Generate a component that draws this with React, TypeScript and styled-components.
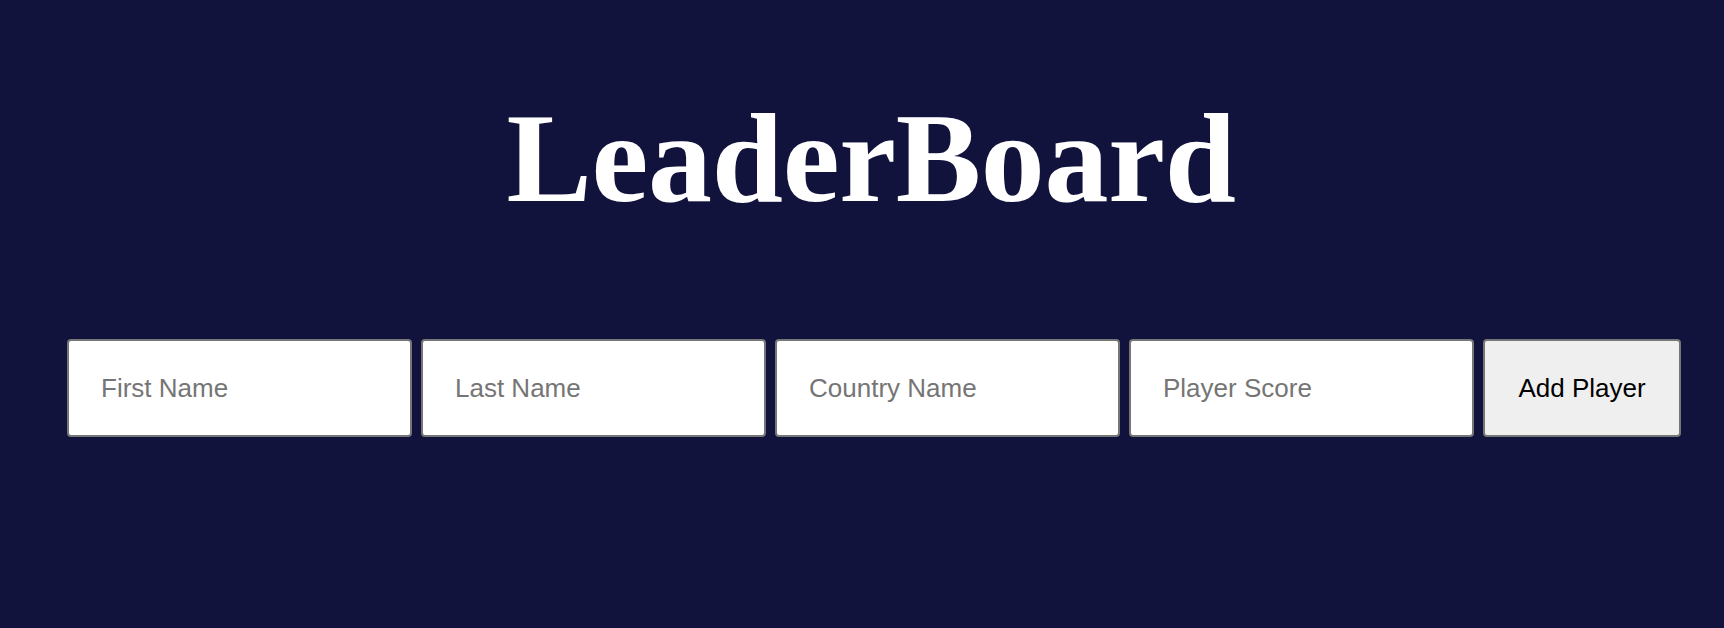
import React from "react";
import styled, { createGlobalStyle } from "styled-components";

const GlobalStyle = createGlobalStyle`
  html, body {
    margin: 0;
    padding: 0;
    background: #11133c;
  }
  body {
    font-family: "Liberation Sans", Arial, sans-serif;
  }
`;

const Page = styled.main`
  min-height: 628px;
  box-sizing: border-box;
  background: #11133c;
  padding: 94px 0 0 18px;
  display: flex;
  flex-direction: column;
  align-items: center;
`;

const Title = styled.h1`
  margin: 0;
  font-family: "Liberation Serif", "Times New Roman", serif;
  font-weight: 700;
  font-size: 128px;
  line-height: 128px;
  letter-spacing: -0.3px;
  color: #ffffff;
`;

const Form = styled.form`
  margin-top: 117px;
  display: flex;
  gap: 9px;
  padding-left: 6px;
`;

const Field = styled.input`
  box-sizing: border-box;
  width: 345px;
  height: 98px;
  padding: 0 32px;
  border: 2px solid #767676;
  border-radius: 4px;
  background: #ffffff;
  font-family: "Liberation Sans", Arial, sans-serif;
  font-size: 26px;
  color: #000;
  outline: none;
  &::placeholder {
    color: #757575;
  }
`;

const Button = styled.button`
  box-sizing: border-box;
  width: 198px;
  height: 98px;
  padding: 0 32px;
  border: 2px solid #767676;
  border-radius: 4px;
  background: #efefef;
  font-family: "Liberation Sans", Arial, sans-serif;
  font-size: 26px;
  color: #000;
  white-space: nowrap;
  cursor: pointer;
`;

export default function App() {
  const fields = ["First Name", "Last Name", "Country Name", "Player Score"];
  return (
    <>
      <GlobalStyle />
      <Page>
        <Title>LeaderBoard</Title>
        <Form onSubmit={(e) => e.preventDefault()}>
          {fields.map((f) => (
            <Field key={f} type="text" placeholder={f} />
          ))}
          <Button type="submit">Add Player</Button>
        </Form>
      </Page>
    </>
  );
}
